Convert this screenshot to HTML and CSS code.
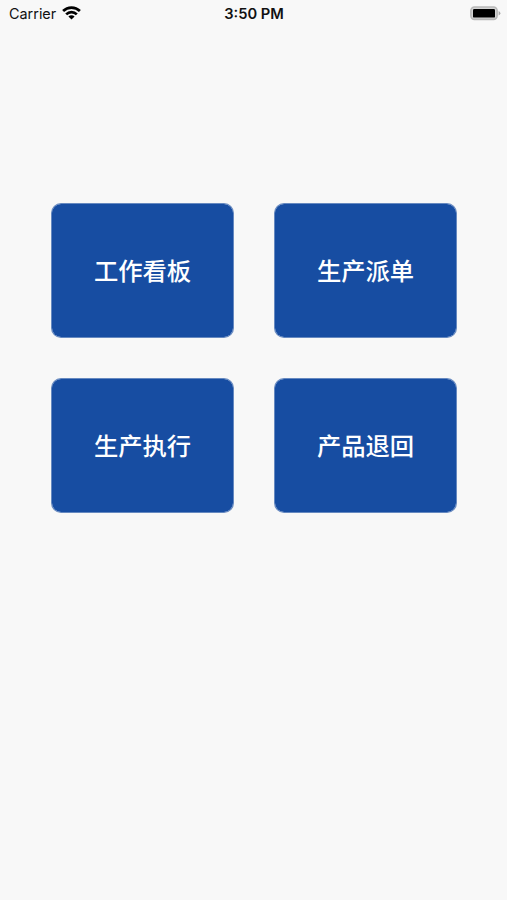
FILE: index.html
```html
<!DOCTYPE html>
<html lang="zh-CN">
<head>
<meta charset="utf-8">
<title>生产</title>
<link rel="stylesheet" href="styles.css">
</head>
<body>
<header class="status">
  <div class="carrier"><span class="carrier-name">Carrier</span>
    <svg class="wifi" width="19" height="14" viewBox="0 0 19 14"><g fill="none" stroke="#000" stroke-width="2.7"><path d="M1.1 5a12 12 0 0 1 16.8 0"/><path d="M4.2 8.4a7.5 7.5 0 0 1 10.6 0"/></g><path d="M9.5 13.6L6.4 10.6a4.4 4.4 0 0 1 6.2 0z"/></svg>
  </div>
  <time class="time">3:50 PM</time>
  <svg class="battery" width="31" height="15" viewBox="0 0 31 15"><rect x=".9" y="1" width="26.2" height="12.4" rx="3.6" fill="#d4d4d4" stroke="#b8b8b8" stroke-width="1.6"/><rect x="3" y="3" width="22" height="8.6" rx="1.2"/><path d="M28.6 5q1.8.8 1.8 2.2t-1.8 2.2z" fill="#aaa"/></svg>
</header>
<main class="menu">
  <button class="tile">工作看板</button>
  <button class="tile">生产派单</button>
  <button class="tile">生产执行</button>
  <button class="tile">产品退回</button>
</main>
</body>
</html>
```

FILE: styles.css
```css
body {
  margin: 0;
  min-height: 900px;
  background: #f8f8f8;
  font-family: Inter, "Noto Sans CJK SC", sans-serif;
}
.status {
  display: grid;
  grid-template-columns: 1fr auto 1fr;
  align-items: center;
  height: 27px;
  padding: 0 6px 0 9px;
  color: #111;
}
.carrier {
  display: flex;
  align-items: center;
  gap: 5px;
  font-size: 14.4px;
}
.carrier-name {
  width: 48px;
}
.wifi {
  display: block;
  margin-top: -1px;
}
.time {
  margin-right: 2px;
  font-size: 14.7px;
  font-weight: 600;
}
.battery {
  justify-self: end;
  margin-top: -1px;
}
.menu {
  display: grid;
  grid-template-columns: 183px 183px;
  grid-auto-rows: 135px;
  gap: 40px;
  padding: 176px 0 0 51px;
}
.tile {
  padding: 0 0 3px;
  border: 1px solid rgba(23, 77, 162, 0.65);
  border-radius: 10px;
  background: #174da2;
  background-clip: padding-box;
  color: #fff;
  font: 500 24.3px "Noto Sans CJK SC", sans-serif;
}
```
